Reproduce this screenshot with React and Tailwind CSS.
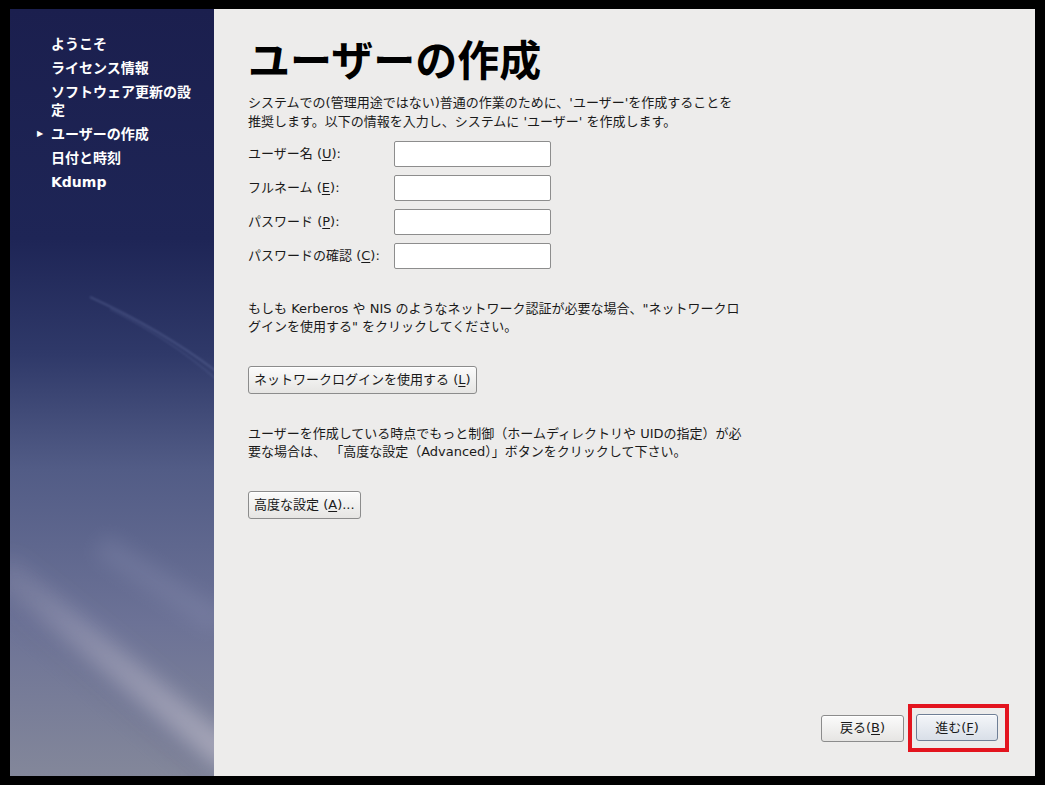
import React from 'react'

const font = { fontFamily: '"DejaVu Sans", "Noto Sans CJK JP", sans-serif' }

const Key = ({ k }) => <span className="underline underline-offset-2">{k}</span>

const sideItems = [
  { label: 'ようこそ' },
  { label: 'ライセンス情報' },
  { label: 'ソフトウェア更新の設定' },
  { label: 'ユーザーの作成', current: true },
  { label: '日付と時刻' },
  { label: 'Kdump' },
]

const fields = [
  { label: 'ユーザー名', k: 'U', type: 'text' },
  { label: 'フルネーム', k: 'E', type: 'text' },
  { label: 'パスワード', k: 'P', type: 'password' },
  { label: 'パスワードの確認', k: 'C', type: 'password' },
]

const btn =
  'rounded-[3px] border border-[#8c8c8c] bg-gradient-to-b from-[#fbfbfb] to-[#e6e5e3] text-[13px] text-[#1a1a1a] shadow-[inset_0_1px_0_#ffffff]'

function Sidebar() {
  return (
    <div className="relative w-[204px] shrink-0 overflow-hidden">
      {/* wallpaper */}
      <svg className="absolute inset-0 h-full w-full" viewBox="0 0 204 767" preserveAspectRatio="none">
        <defs>
          <linearGradient id="sky" x1="0" y1="0" x2="0" y2="1">
            <stop offset="0" stopColor="#1b1f4e" />
            <stop offset="0.3" stopColor="#1e2556" />
            <stop offset="0.45" stopColor="#2f3969" />
            <stop offset="0.6" stopColor="#525c86" />
            <stop offset="0.8" stopColor="#6c7296" />
            <stop offset="1" stopColor="#83879a" />
          </linearGradient>
          <linearGradient id="band" x1="0" y1="0" x2="1" y2="0">
            <stop offset="0" stopColor="#b8b6c8" stopOpacity="0.15" />
            <stop offset="0.5" stopColor="#b8b6c8" stopOpacity="0.45" />
            <stop offset="1" stopColor="#c4c1d0" stopOpacity="0.6" />
          </linearGradient>
          <filter id="blur" x="-50%" y="-50%" width="200%" height="200%">
            <feGaussianBlur stdDeviation="10" />
          </filter>
          <filter id="soft" x="-50%" y="-50%" width="200%" height="200%">
            <feGaussianBlur stdDeviation="0.8" />
          </filter>
        </defs>
        <rect width="204" height="767" fill="url(#sky)" />
        <path d="M80 288 Q150 320 206 362" stroke="#8f9ccc" strokeWidth="1.4" fill="none" opacity="0.3" filter="url(#soft)" />
        <path d="M100 300 Q160 330 206 370" stroke="#8f9ccc" strokeWidth="1.1" fill="none" opacity="0.2" filter="url(#soft)" />
        <path d="M90 536 L210 614" stroke="#9a9ebe" strokeWidth="24" fill="none" opacity="0.22" filter="url(#blur)" />
        <path d="M0 566 L214 748 L214 790 L0 606 Z" fill="#5c6288" opacity="0.2" filter="url(#blur)" />
        <path d="M-10 560 L220 750" stroke="url(#band)" strokeWidth="30" fill="none" filter="url(#blur)" />
      </svg>
      <ul className="relative pl-[27px] pt-[26px] text-[14px] font-bold leading-[18px] text-white" style={font}>
        {sideItems.map((it) => (
          <li key={it.label} className="mb-[6px] flex">
            <span className="w-[14px] shrink-0 text-[8px] leading-[18px]">{it.current ? '▶' : ''}</span>
            <span className="w-[146px]">{it.label}</span>
          </li>
        ))}
      </ul>
    </div>
  )
}

export default function App() {
  return (
    <div className="flex h-[785px] w-[1045px] bg-black pb-[9px] pl-[10px] pr-[10px] pt-[9px]" style={font}>
      <Sidebar />
      <div className="flex flex-1 flex-col bg-[#edeceb] pl-[34px] text-[#1a1a1a]">
        <h1 className="mt-[27px] text-[42px] font-bold leading-[52px] text-black">ユーザーの作成</h1>
        <p className="mt-[5px] w-[496px] text-[13px] leading-[19px]">
          システムでの(管理用途ではない)普通の作業のために、'ユーザー'を作成することを推奨します。以下の情報を入力し、システムに 'ユーザー' を作成します。
        </p>
        <div className="mt-[10px] flex flex-col gap-[8px]">
          {fields.map((f) => (
            <div key={f.k} className="flex items-center">
              <label className="w-[146px] text-[13px]">
                {f.label} (<Key k={f.k} />):
              </label>
              <input
                type={f.type}
                className="h-[26px] w-[157px] rounded-[2px] border border-[#8d8d8d] bg-white px-1 text-[13px] outline-none"
              />
            </div>
          ))}
        </div>
        <p className="mt-[31px] w-[500px] text-[13px] leading-[18px]">
          もしも Kerberos や NIS のようなネットワーク認証が必要な場合、"ネットワークログインを使用する" をクリックしてください。
        </p>
        <div className="mt-[30px]">
          <button className={`${btn} h-[28px] px-[5px]`}>
            ネットワークログインを使用する (<Key k="L" />)
          </button>
        </div>
        <p className="mt-[31px] w-[500px] text-[13px] leading-[18px]">
          ユーザーを作成している時点でもっと制御（ホームディレクトリや UIDの指定）が必要な場合は、 「高度な設定（Advanced）」ボタンをクリックして下さい。
        </p>
        <div className="mt-[30px]">
          <button className={`${btn} h-[28px] px-[5px]`}>
            高度な設定 (<Key k="A" />)...
          </button>
        </div>
        <div className="mb-[24px] mr-[26px] mt-auto flex items-center justify-end gap-[4px]">
          <button className={`${btn} h-[27px] w-[83px]`}>
            戻る(<Key k="B" />)
          </button>
          <div className="border-4 border-[#e3141e] pb-[7px] pl-[4px] pr-[7px] pt-[6px]">
            <button className="h-[27px] w-[82px] rounded-[3px] border border-[#6f7f96] bg-gradient-to-b from-[#f4f6f9] to-[#d9dfe8] text-[13px] text-[#1a1a1a] shadow-[inset_0_1px_0_#ffffff]">
              進む(<Key k="F" />)
            </button>
          </div>
        </div>
      </div>
    </div>
  )
}
